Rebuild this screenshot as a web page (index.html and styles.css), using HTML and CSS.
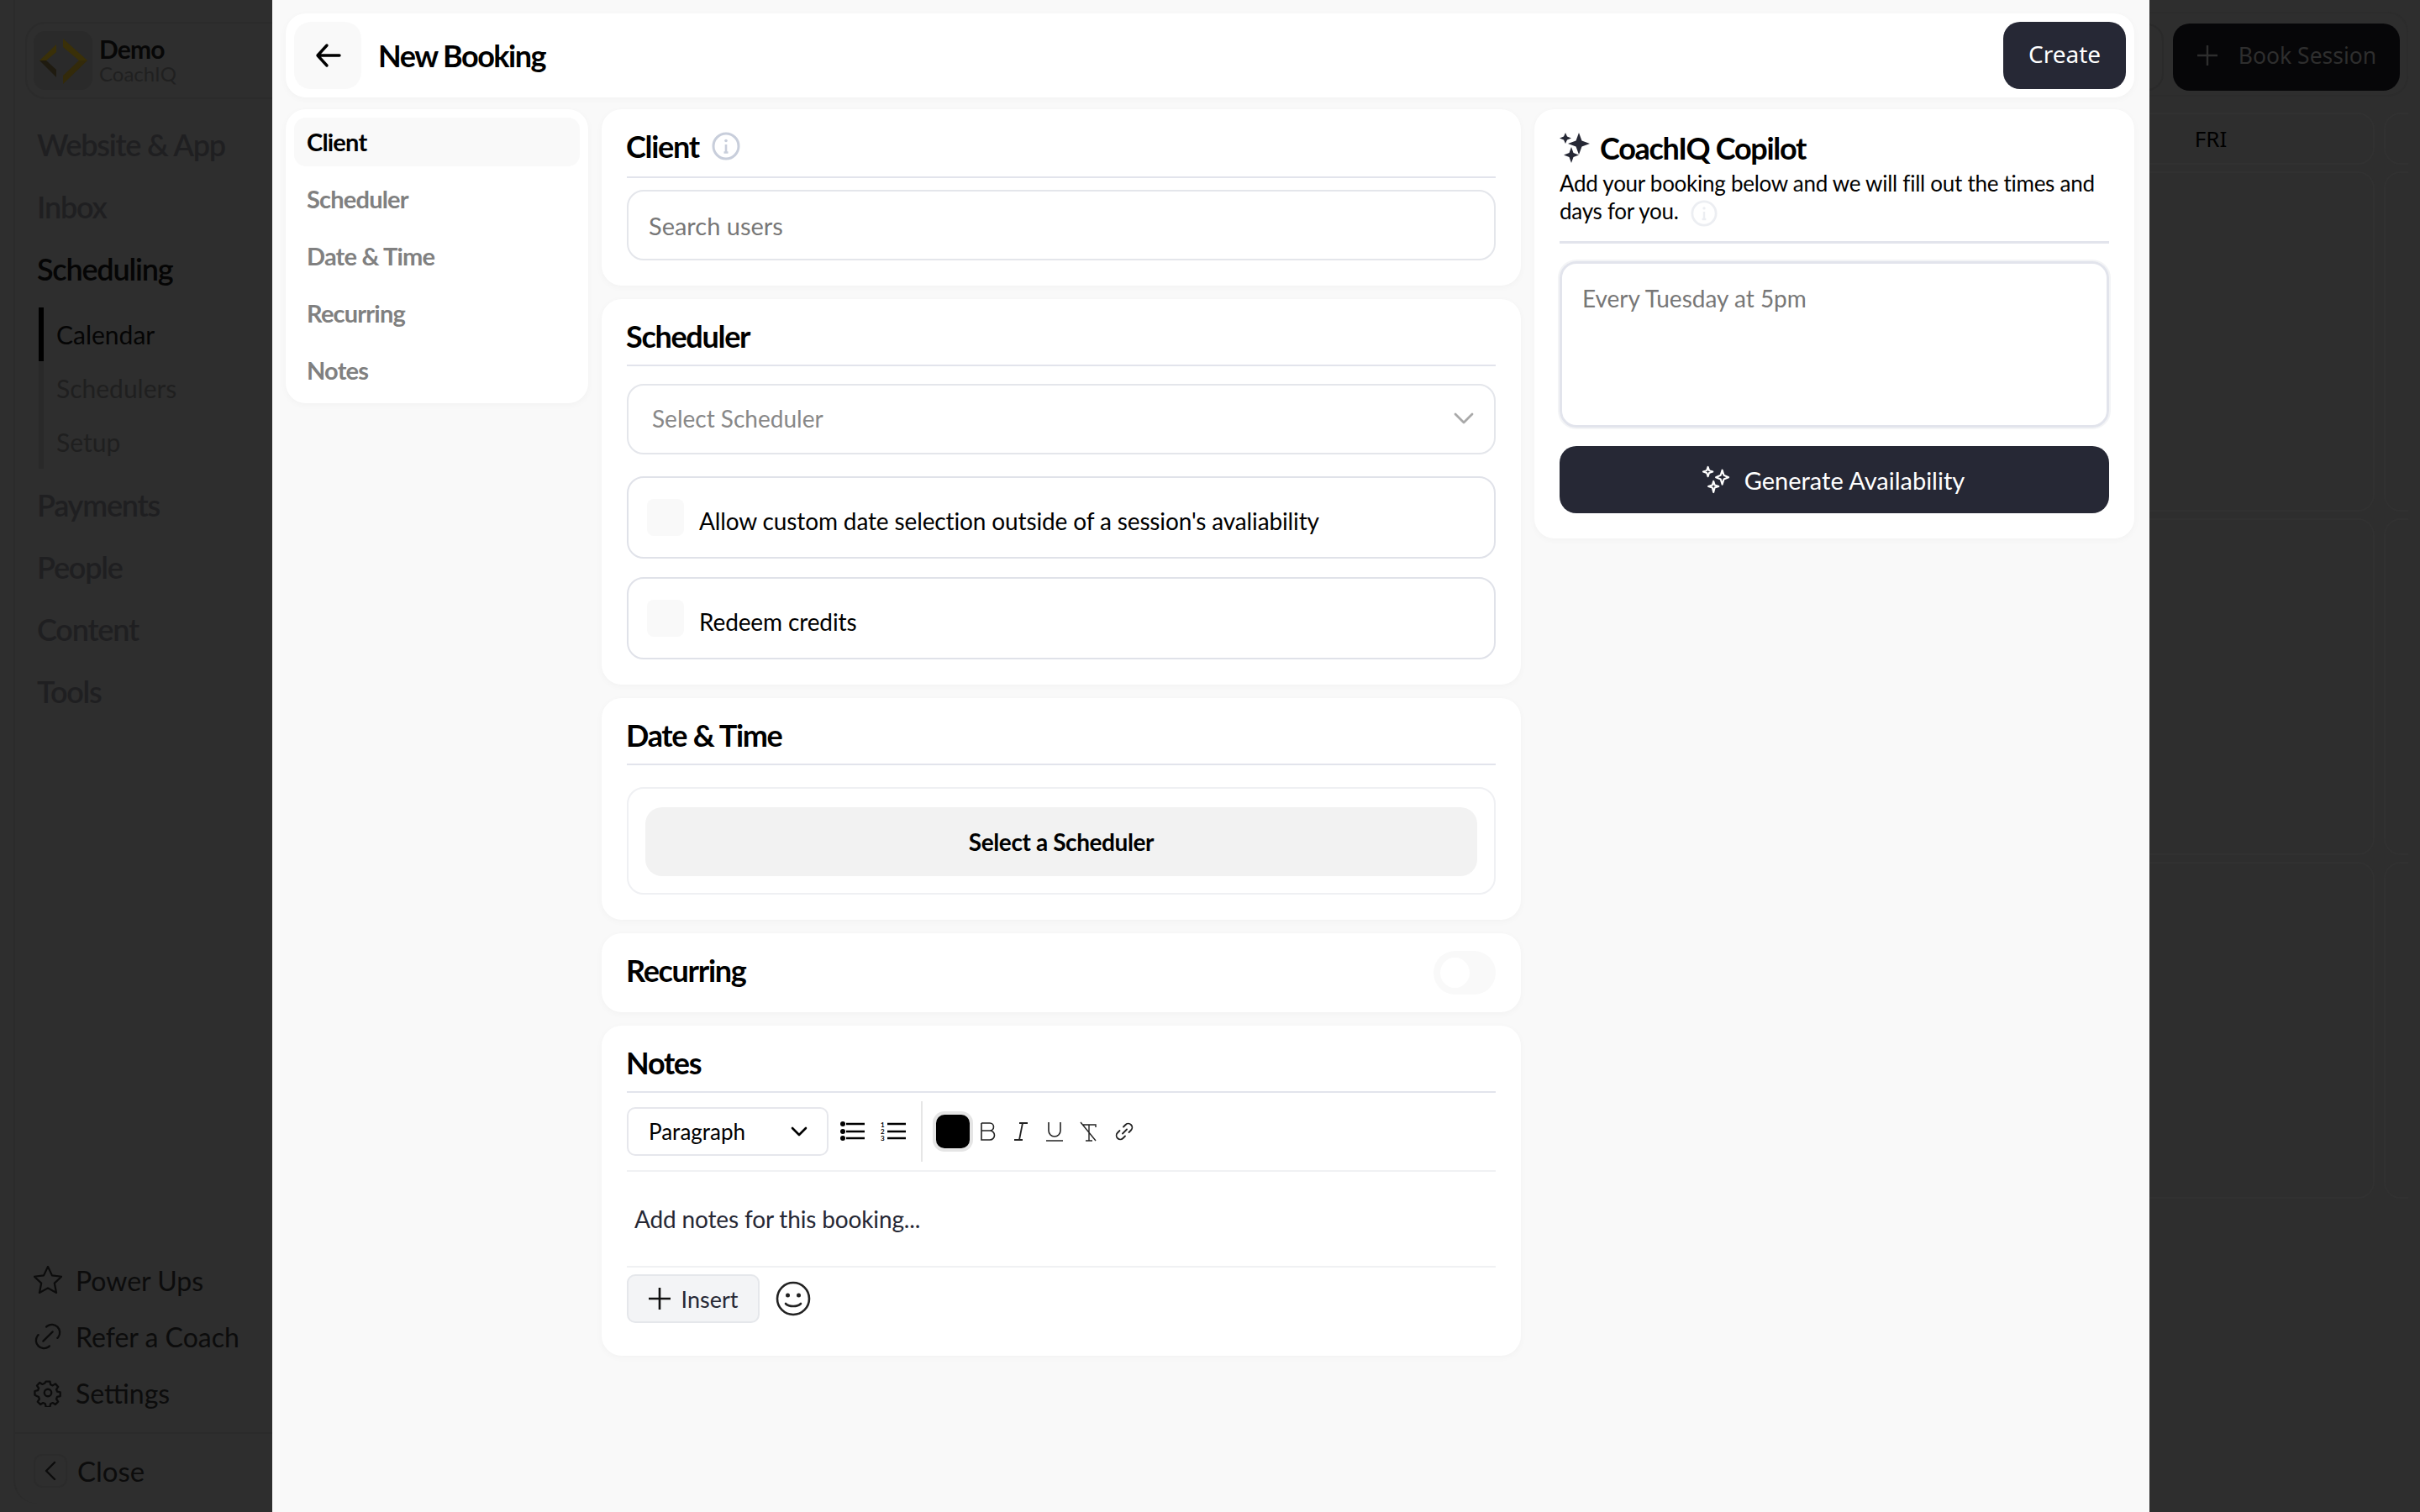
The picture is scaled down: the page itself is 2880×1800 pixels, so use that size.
FILE: index.html
```html
<!DOCTYPE html>
<html lang="en">
<head>
    <meta charset="UTF-8">
    <meta name="viewport" content="width=device-width, initial-scale=1.0">
    <title>New Booking</title>
    <link rel="stylesheet" href="styles.css">
</head>
<body>
    <!-- page behind the dialog -->
    <aside class="sidebar">
        <div class="brand">
            <div class="brand-tile">
                <svg width="70" height="70" viewBox="0 0 70 70">
                    <polygon points="27,16 7,35 15,35 27,25" fill="#3a3008"/>
                    <polygon points="7,35 27,55 27,46 15,35" fill="#1f1b10"/>
                    <polygon points="35,9 64,35 54,35 35,19" fill="#3a3008"/>
                    <polygon points="64,35 35,63 35,53 54,35" fill="#332a0a"/>
                </svg>
            </div>
            <div>
                <div class="brand-name">Demo</div>
                <div class="brand-sub">CoachIQ</div>
            </div>
        </div>
        <nav class="side-nav">
            <a>Website &amp; App</a>
            <a>Inbox</a>
            <a class="current">Scheduling</a>
            <div class="sub-nav">
                <a class="current">Calendar</a>
                <a>Schedulers</a>
                <a>Setup</a>
            </div>
            <a>Payments</a>
            <a>People</a>
            <a>Content</a>
            <a>Tools</a>
        </nav>
        <div class="side-links">
            <a>
                <svg width="34" height="34" viewBox="2 2 20 20" fill="none" stroke="#0c0c0c" stroke-width="1.300" stroke-linejoin="round"><path d="M12 2.500l2.900 6.200 6.600.8-4.900 4.600 1.300 6.700L12 17.500l-5.900 3.300 1.300-6.700-4.900-4.600 6.600-.8z"/></svg>
                Power Ups
            </a>
            <a>
                <svg width="34" height="34" viewBox="3 3 18 18" fill="none" stroke="#0c0c0c" stroke-width="1.200" stroke-linecap="round"><path d="M9 15l6-6"/><path d="M11 6l.5-.5a5 5 0 0 1 7 7l-.5.5"/><path d="M13 18l-.5.5a5 5 0 0 1-7-7l.5-.5"/></svg>
                Refer a Coach
            </a>
            <a>
                <svg width="34" height="34" viewBox="0 0 24 24" fill="none" stroke="#0c0c0c" stroke-width="1.600" stroke-linejoin="round"><circle cx="12" cy="12" r="3"/><path d="M10.300 2.500h3.400l.5 2.600 1.800.8 2.300-1.400 2.300 2.500-1.500 2.200.7 1.800 2.600.6v3.300l-2.600.6-.7 1.800 1.500 2.200-2.300 2.400-2.300-1.400-1.800.8-.5 2.600h-3.400l-.5-2.600-1.800-.8-2.300 1.400-2.300-2.400 1.500-2.200-.7-1.800L1 13.900v-3.300l2.600-.6.7-1.800-1.500-2.200 2.300-2.500 2.300 1.400 1.800-.8z"/></svg>
                Settings
            </a>
        </div>
        <div class="side-close">
            <span class="close-box">
                <svg width="18" height="26" viewBox="0 0 18 26" fill="none" stroke="#0c0c0c" stroke-width="2.400" stroke-linecap="round" stroke-linejoin="round"><path d="M14 3L4 13l10 10"/></svg>
            </span>
            Close
        </div>
    </aside>

    <main class="behind">
        <div class="top-card">
            <span class="ghost-btn"></span>
            <button class="book-btn">
                <svg width="26" height="26" viewBox="0 0 26 26" stroke="#2e2e2e" stroke-width="2.400"><path d="M13 1v24M1 13h24"/></svg>
                Book Session
            </button>
        </div>
        <div class="cal">
            <div class="cal-head"><span>FRI</span></div>
            <div class="cal-head"></div>
            <div class="cal-cell"></div>
            <div class="cal-cell"></div>
            <div class="cal-cell"></div>
            <div class="cal-cell"></div>
            <div class="cal-cell"></div>
            <div class="cal-cell"></div>
        </div>
    </main>

    <!-- dialog -->
    <section class="dialog">
        <header class="dialog-head">
            <button class="back-btn">
                <svg width="32" height="32" viewBox="0 0 32 32" fill="none" stroke="#000" stroke-width="3.400" stroke-linecap="round" stroke-linejoin="round"><path d="M29 16H3M14 4L3 16l11 12"/></svg>
            </button>
            <h1>New Booking</h1>
            <button class="create-btn">Create</button>
        </header>

        <div class="dialog-body">
            <nav class="steps card">
                <a class="active">Client</a>
                <a>Scheduler</a>
                <a>Date &amp; Time</a>
                <a>Recurring</a>
                <a>Notes</a>
            </nav>

            <div class="form-col">
                <section class="card block block-client">
                    <div class="block-head">
                        <h2>Client</h2>
                        <svg class="info" width="34" height="34" viewBox="0 0 34 34" fill="none" stroke="#c8cedb" stroke-width="3"><circle cx="17" cy="17" r="15"/><path d="M17 15v9M14.500 24.500h5" stroke-width="2.600"/><circle cx="17" cy="10.500" r="1.800" fill="#c8cedb" stroke="none"/></svg>
                    </div>
                    <div class="field search-field">Search users</div>
                </section>

                <section class="card block">
                    <div class="block-head"><h2>Scheduler</h2></div>
                    <div class="field select-field">
                        Select Scheduler
                        <svg width="24" height="14" viewBox="0 0 24 14" fill="none" stroke="#a9a9a9" stroke-width="2.800" stroke-linecap="round" stroke-linejoin="round"><path d="M2 2l10 10L22 2"/></svg>
                    </div>
                    <label class="check-row">
                        <span class="check"></span>
                        <span class="check-label">Allow custom date selection outside of a session's avaliability</span>
                    </label>
                    <label class="check-row check-row-last">
                        <span class="check"></span>
                        <span class="check-label">Redeem credits</span>
                    </label>
                </section>

                <section class="card block">
                    <div class="block-head"><h2>Date &amp; Time</h2></div>
                    <div class="date-box">
                        <button class="pick-btn">Select a Scheduler</button>
                    </div>
                </section>

                <section class="card block-row">
                    <h2>Recurring</h2>
                    <span class="toggle"><span class="knob"></span></span>
                </section>

                <section class="card block block-notes">
                    <div class="block-head"><h2>Notes</h2></div>
                    <div class="toolbar">
                        <div class="para-select">
                            Paragraph
                            <svg width="22" height="14" viewBox="0 0 22 14" fill="none" stroke="#000" stroke-width="2.600" stroke-linecap="round" stroke-linejoin="round"><path d="M3 3l8 8 8-8"/></svg>
                        </div>
                        <svg class="tb-ul" width="30" height="24" viewBox="0 0 30 24" stroke="#000" stroke-width="2.600">
                            <circle cx="3" cy="3" r="3" stroke="none"/><circle cx="3" cy="12" r="3" stroke="none"/><circle cx="3" cy="20" r="3" stroke="none"/>
                            <path d="M7 3h22M7 12h22M7 20h22"/>
                        </svg>
                        <svg class="tb-ol" width="30" height="24" viewBox="0 0 30 24" stroke="#000" stroke-width="2.600">
                            <text x="0" y="7" class="tb-num">1</text><text x="0" y="15" class="tb-num">2</text><text x="0" y="23" class="tb-num">3</text>
                            <path d="M8 3h22M8 12h22M8 20h22"/>
                        </svg>
                        <span class="tb-sep"></span>
                        <span class="swatch"><span class="swatch-fill"></span></span>
                        <svg class="tb-b" width="20" height="22" viewBox="0 0 20 22" fill="none" stroke="#222" stroke-width="1.600"><path d="M2 1v20h10a5.500 5.500 0 0 0 0-11H2m10 0a4.500 4.500 0 0 0 0-9H2"/></svg>
                        <svg class="tb-i" width="18" height="22" viewBox="0 0 18 22" fill="none" stroke="#222" stroke-width="1.800"><path d="M7 1h10M1 21h10M11 1L7 21"/></svg>
                        <svg class="tb-u" width="22" height="24" viewBox="0 0 22 24" fill="none" stroke="#222" stroke-width="1.600"><path d="M4 1v10a7 7 0 0 0 14 0V1M1 23h20"/></svg>
                        <svg class="tb-x" width="22" height="24" viewBox="0 0 22 24" fill="none" stroke="#222" stroke-width="1.400"><path d="M5 4h15v3M12 4v19M8 23h8M2 1l18 22"/></svg>
                        <svg class="tb-link" width="24" height="24" viewBox="0 0 24 24" fill="none" stroke="#222" stroke-width="1.800" stroke-linecap="round"><path d="M10 14.500l5-5"/><path d="M11 6.500l2.500-2.500a4.500 4.500 0 0 1 6.500 6.500L17.500 13"/><path d="M13 17.500L10.500 20A4.500 4.500 0 0 1 4 13.500L6.500 11"/></svg>
                    </div>
                    <div class="editor">Add notes for this booking...</div>
                    <div class="notes-foot">
                        <button class="insert-btn">
                            <svg width="26" height="26" viewBox="0 0 26 26" stroke="#111" stroke-width="2.600"><path d="M13 0v26M0 13h26"/></svg>
                            Insert
                        </button>
                        <svg width="42" height="42" viewBox="0 0 42 42" fill="none" stroke="#222" stroke-width="2.600"><circle cx="21" cy="21" r="19"/><circle cx="14.500" cy="17" r="2.500" fill="#222" stroke="none"/><circle cx="27.500" cy="17" r="2.500" fill="#222" stroke="none"/><path d="M12 27c4 4 14 4 18 0" stroke-linecap="round"/></svg>
                    </div>
                </section>
            </div>

            <aside class="copilot card">
                <div class="copilot-title">
                    <svg width="36" height="36" viewBox="0 0 36 36" fill="#262835">
                        <path d="M23 0l3.500 9.500L36 13l-9.500 3.500L23 26l-3.500-9.500L10 13l9.500-3.500z"/>
                        <path d="M7 0l2 4.500L14 6.500 9 8.500 7 13 5 8.500 0 6.500 5 4.500z"/>
                        <path d="M14 17l2.500 7L23 26.500 16.500 29 14 36l-2.500-7L5 26.500l6.500-2.500z"/>
                    </svg>
                    <h2>CoachIQ Copilot</h2>
                </div>
                <p class="copilot-text">Add your booking below and we will fill out the times and days for you. <svg class="info-faint" width="32" height="32" viewBox="0 0 34 34" fill="none" stroke="#eceef2" stroke-width="3"><circle cx="17" cy="17" r="15"/><path d="M17 15v9M14.500 24.500h5" stroke-width="2.600"/><circle cx="17" cy="10.500" r="1.800" fill="#eceef2" stroke="none"/></svg></p>
                <div class="copilot-input">Every Tuesday at 5pm</div>
                <button class="generate-btn">
                    <svg width="34" height="34" viewBox="0 0 36 36" fill="none" stroke="#fff" stroke-width="2.200" stroke-linejoin="round">
                        <path d="M25 6l2 6.500L33 15l-6 2.500L25 24l-2-6.500L17 15l6-2.500z"/>
                        <path d="M7 2l1.500 4.500L13 8 8.500 9.500 7 14 5.500 9.500 1 8l4.500-1.500z"/>
                        <path d="M14 20l1.500 5 5 1.500-5 1.500L14 34l-1.500-6-5-1.500 5-1.500z"/>
                    </svg>
                    Generate Availability
                </button>
            </aside>
        </div>
    </section>
</body>
</html>
```
FILE: styles.css
```css
* {
    box-sizing: border-box;
}

body {
    margin: 0;
    height: 1800px;
    display: flex;
    overflow: hidden;
    background-color: #2e2e2e;
    font-family: Lato, "Liberation Sans", sans-serif;
    color: #000;
}

button {
    font-family: inherit;
    border: none;
    cursor: pointer;
}

h1, h2, p {
    margin: 0;
}

/* sidebar behind the overlay */
.sidebar {
    width: 700px;
    height: 1790px;
    margin-left: 16px;
    padding: 26px 12px 0 12px;
    display: flex;
    flex-direction: column;
    border-left: 2px solid #2b2b2b;
    border-bottom-left-radius: 28px;
}

.brand {
    height: 92px;
    display: flex;
    align-items: center;
    gap: 8px;
    padding-left: 8px;
    border: 2px solid #2b2b2b;
    border-radius: 24px;
}

.brand-tile {
    width: 70px;
    height: 70px;
    border-radius: 14px;
    background-color: #2a2a2a;
}

.brand-name {
    font-size: 30px;
    font-weight: 700;
    line-height: 32px;
    letter-spacing: -0.8px;
    color: #070707;
}

.brand-sub {
    font-size: 24px;
    line-height: 28px;
    color: #202020;
}

.side-nav {
    margin-top: 17px;
    padding-left: 14px;
    display: flex;
    flex-direction: column;
}

.side-nav > a {
    height: 74px;
    line-height: 74px;
    font-size: 36px;
    font-weight: 600;
    letter-spacing: -1.2px;
    color: #1f1f21;
}

.side-nav > a.current {
    color: #050505;
}

.sub-nav {
    margin: 9px 0 6px 2px;
    display: flex;
    flex-direction: column;
    border-left: 6px solid #292929;
}

.sub-nav a {
    height: 64px;
    line-height: 64px;
    margin-left: -6px;
    padding-left: 15px;
    font-size: 30px;
    color: #1f1f1f;
    border-left: 6px solid transparent;
}

.sub-nav a.current {
    color: #050505;
    border-left-color: #000;
}

.side-links {
    margin-top: auto;
    display: flex;
    flex-direction: column;
    gap: 33px;
    padding-left: 10px;
}

.side-links a {
    display: flex;
    align-items: center;
    gap: 16px;
    height: 34px;
    font-size: 32px;
    color: #0c0c0c;
}

.side-close {
    margin: 30px -12px 0 -12px;
    height: 85px;
    padding: 4px 0 0 22px;
    display: flex;
    align-items: center;
    gap: 12px;
    font-size: 33px;
    color: #0c0c0c;
    border-top: 2px solid #2b2b2b;
}

.close-box {
    width: 40px;
    height: 40px;
    display: flex;
    align-items: center;
    justify-content: center;
    border: 2px solid #2b2b2b;
    border-radius: 10px;
}

/* right side behind the overlay */
.behind {
    flex: 1;
    min-width: 0;
    display: flex;
    flex-direction: column;
    align-items: flex-end;
    padding: 14px 14px 0 0;
}

.top-card {
    width: 400px;
    height: 102px;
    padding-top: 12px;
    padding-right: 8px;
    display: flex;
    justify-content: flex-end;
    gap: 11px;
    border: 2px solid #2c2c2c;
    border-radius: 24px;
}

.ghost-btn {
    width: 60px;
    height: 80px;
    border: 2px solid #2a2a2a;
    border-radius: 20px;
}

.book-btn {
    width: 270px;
    height: 80px;
    padding-bottom: 6px;
    display: flex;
    align-items: center;
    justify-content: center;
    gap: 24px;
    font-family: "Noto Sans", sans-serif;
    font-size: 26.500px;
    color: #2e2e2e;
    background-color: #060608;
    border-radius: 20px;
}

.cal {
    width: 430px;
    height: 1700px;
    padding-top: 19px;
    display: grid;
    grid-template-columns: 390px 390px;
    grid-template-rows: 62px 405px 401px 401px;
    gap: 8px 11px;
    overflow: hidden;
}

.cal-head, .cal-cell {
    border: 2px solid #313131;
    border-radius: 20px;
}

.cal-head {
    display: flex;
    align-items: center;
    justify-content: center;
    font-family: "Noto Sans", sans-serif;
    font-size: 26px;
    color: #000;
}

/* dialog */
.dialog {
    position: fixed;
    top: 0;
    left: 324px;
    width: 2234px;
    height: 1800px;
    padding: 16px 18px 16px 16px;
    background-color: #f9f9f9;
}

.card {
    background-color: #fff;
    border-radius: 24px;
    box-shadow: 0 2px 8px rgba(0, 0, 0, 0.03);
}

.dialog-head {
    height: 100px;
    padding: 10px;
    display: flex;
    align-items: center;
    background-color: #fff;
    border-radius: 24px;
    box-shadow: 0 2px 8px rgba(0, 0, 0, 0.03);
}

.back-btn {
    width: 80px;
    height: 80px;
    padding-left: 8px;
    display: flex;
    align-items: center;
    justify-content: center;
    background-color: #f9f9f9;
    border-radius: 20px;
}

.dialog-head h1 {
    margin-left: 20px;
    font-size: 36px;
    font-weight: 700;
    letter-spacing: -1.5px;
}

.create-btn {
    margin-left: auto;
    width: 146px;
    height: 80px;
    padding-bottom: 6px;
    font-family: "Noto Sans", sans-serif;
    font-size: 28px;
    color: #fff;
    background-color: #262835;
    border-radius: 20px;
}

.dialog-body {
    margin-top: 14px;
    display: grid;
    grid-template-columns: 360px 1094px 714px;
    gap: 16px;
    align-items: start;
}

.steps {
    height: 350px;
    padding: 10px;
    display: flex;
    flex-direction: column;
    gap: 10px;
}

.steps a {
    height: 58px;
    line-height: 58px;
    padding-left: 15px;
    font-size: 29px;
    font-weight: 700;
    letter-spacing: -0.8px;
    color: #808080;
    border-radius: 14px;
}

.steps a.active {
    color: #000;
    background-color: #f9f9f9;
}

.form-col {
    display: flex;
    flex-direction: column;
    gap: 16px;
}

.block {
    padding: 22px 30px 30px 30px;
}

.block h2, .block-row h2, .copilot-title h2 {
    font-size: 36px;
    font-weight: 700;
    line-height: 44px;
    letter-spacing: -1.3px;
}

.block h2, .block-row h2 {
    margin-left: -1px;
}

.block-head {
    display: flex;
    align-items: center;
    gap: 15px;
    padding-bottom: 12px;
    border-bottom: 2px solid #e2e4ec;
}

.block-client .block-head {
    padding-bottom: 14px;
}

.field {
    display: flex;
    align-items: center;
    border: 2px solid #e4e6eb;
    border-radius: 20px;
    font-size: 29px;
    color: #777;
}

.search-field {
    height: 84px;
    margin-top: 14px;
    padding-left: 24px;
}

.select-field {
    height: 84px;
    margin-top: 21px;
    padding: 0 24px 2px 28px;
    justify-content: space-between;
    font-size: 28px;
    color: #888;
}

.check-row {
    height: 98px;
    margin-top: 26px;
    padding-left: 22px;
    display: flex;
    align-items: center;
    gap: 18px;
    font-size: 28px;
    letter-spacing: -0.13px;
    border: 2px solid #e0e2e9;
    border-radius: 20px;
}

.check-row-last {
    margin-top: 22px;
}

.check {
    width: 44px;
    height: 44px;
    background-color: #f9f9f9;
    border-radius: 8px;
}

.check-label {
    padding-top: 8px;
}

.date-box {
    height: 128px;
    margin-top: 26px;
    padding: 22px 20px;
    border: 2px solid #eff0f3;
    border-radius: 20px;
}

.pick-btn {
    width: 100%;
    height: 82px;
    font-size: 28px;
    font-weight: 700;
    letter-spacing: -0.4px;
    color: #000;
    background-color: #f2f2f2;
    border-radius: 20px;
}

.block-row {
    height: 94px;
    padding: 0 30px;
    display: flex;
    align-items: center;
    justify-content: space-between;
    background-color: #fff;
    border-radius: 24px;
    box-shadow: 0 2px 8px rgba(0, 0, 0, 0.03);
}

.block-row h2 {
    padding-bottom: 6px;
}

.toggle {
    width: 74px;
    height: 52px;
    padding: 8px;
    background-color: #f9f9f9;
    border-radius: 26px;
}

.knob {
    display: block;
    width: 35px;
    height: 36px;
    background-color: #fff;
    border-radius: 50%;
}

.block-notes {
    height: 393px;
}

.toolbar {
    height: 94px;
    display: flex;
    align-items: center;
    border-bottom: 2px solid #f0f1f3;
}

.para-select {
    width: 240px;
    height: 58px;
    padding: 0 22px 0 24px;
    display: flex;
    align-items: center;
    justify-content: space-between;
    font-size: 26px;
    border: 2px solid #e6e7ec;
    border-radius: 10px;
}

.tb-ul {
    margin-left: 14px;
}

.tb-ol {
    margin-left: 18px;
}

.tb-num {
    font-size: 8px;
    font-weight: 700;
    stroke: none;
}

.tb-sep {
    width: 2px;
    height: 72px;
    margin-left: 18px;
    background-color: #e6e6e6;
}

.swatch {
    width: 48px;
    height: 48px;
    margin-left: 12px;
    padding: 4px;
    background-color: #e5e5e5;
    border-radius: 14px;
}

.swatch-fill {
    display: block;
    width: 40px;
    height: 40px;
    background-color: #000;
    border-radius: 10px;
}

.tb-b {
    margin-left: 8px;
}

.tb-i {
    margin-left: 20px;
}

.tb-u {
    margin-left: 20px;
}

.tb-x {
    margin-left: 18px;
}

.tb-link {
    margin-left: 20px;
}

.editor {
    height: 114px;
    padding-left: 9px;
    display: flex;
    align-items: center;
    font-size: 28px;
    letter-spacing: -0.15px;
    color: #262835;
    border-bottom: 2px solid #f0f1f3;
}

.notes-foot {
    margin-top: 8px;
    display: flex;
    align-items: center;
    gap: 19px;
}

.insert-btn {
    width: 158px;
    height: 58px;
    display: flex;
    align-items: center;
    justify-content: center;
    gap: 13px;
    font-size: 27px;
    color: #262835;
    background-color: #f3f4f6;
    border: 2px solid #e5e7eb;
    border-radius: 10px;
}

.copilot {
    height: 511px;
    padding: 24px 30px 0 30px;
}

.copilot-title {
    display: flex;
    align-items: center;
    gap: 12px;
}

.copilot-text {
    margin-top: 4px;
    padding-bottom: 17px;
    font-size: 26px;
    line-height: 33px;
    letter-spacing: -0.27px;
    border-bottom: 3px solid #e2e4ec;
}

.info-faint {
    vertical-align: middle;
    margin-left: 8px;
}

.copilot-input {
    height: 198px;
    margin-top: 21px;
    padding: 24px 24px;
    font-size: 28px;
    color: #777;
    border: 3px solid #e2e4ec;
    box-shadow: 0 0 0 2px #f3f4f6;
    border-radius: 20px;
}

.generate-btn {
    width: 100%;
    height: 80px;
    margin-top: 22px;
    padding-right: 8px;
    display: flex;
    align-items: center;
    justify-content: center;
    gap: 16px;
    font-size: 29px;
    color: #fff;
    background-color: #262835;
    border-radius: 20px;
}
```
